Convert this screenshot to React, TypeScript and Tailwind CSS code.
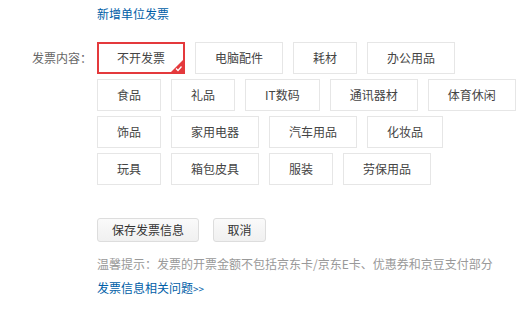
import React from "react";

const rows: string[][] = [
  ["不开发票", "电脑配件", "耗材", "办公用品"],
  ["食品", "礼品", "IT数码", "通讯器材", "体育休闲"],
  ["饰品", "家用电器", "汽车用品", "化妆品"],
  ["玩具", "箱包皮具", "服装", "劳保用品"],
];

function Item({ label, selected }: { label: string; selected?: boolean }) {
  if (selected) {
    return (
      <div className="relative flex h-[32px] items-center justify-center border-2 border-[#e4393c] px-[18px] text-[12px] text-[#444]">
        {label}
        <svg className="absolute bottom-0 right-0" width="12" height="12" viewBox="0 0 12 12">
          <polygon points="12,0 12,12 0,12" fill="#e4393c" />
          <polyline points="5,8.5 7,10.5 10.5,6.5" fill="none" stroke="#fff" strokeWidth="1.3" />
        </svg>
      </div>
    );
  }
  return (
    <div className="flex h-[32px] items-center justify-center border border-[#e6e6e6] px-[19px] text-[12px] text-[#444]">
      {label}
    </div>
  );
}

export default function App() {
  return (
    <div
      className="h-[326px] w-[523px] bg-white text-[12px]"
      style={{ fontFamily: '"Microsoft YaHei", "Noto Sans CJK SC", sans-serif' }}
    >
      <div className="pl-[97px] pt-[5px] leading-[18px] text-[#005ea7]">新增单位发票</div>
      <div className="mt-[19px] flex">
        <div className="flex h-[32px] w-[97px] items-center justify-end pr-[5px] text-[#666]">发票内容：</div>
        <div className="flex flex-col gap-[5px]">
          {rows.map((r, i) => (
            <div key={i} className="flex gap-[10px]">
              {r.map((l, j) => (
                <Item key={l} label={l} selected={i === 0 && j === 0} />
              ))}
            </div>
          ))}
        </div>
      </div>
      <div className="mt-[33px] flex gap-[14px] pl-[97px]">
        <button className="flex h-[24px] w-[102px] items-center justify-center rounded-[3px] border border-[#ddd] bg-gradient-to-b from-[#fafafa] to-[#f0f0f0] text-[12px] text-[#333]">
          保存发票信息
        </button>
        <button className="flex h-[24px] w-[53px] items-center justify-center rounded-[3px] border border-[#ddd] bg-gradient-to-b from-[#fafafa] to-[#f0f0f0] text-[12px] text-[#333]">
          取消
        </button>
      </div>
      <div className="mt-[13px] pl-[97px] leading-[18px] text-[#999]">
        温馨提示：发票的开票金额不包括京东卡/京东E卡、优惠券和京豆支付部分
      </div>
      <div className="mt-[6px] pl-[97px] leading-[18px] text-[#005ea7]">
        发票信息相关问题<span className="text-[10px]">&gt;&gt;</span>
      </div>
    </div>
  );
}
